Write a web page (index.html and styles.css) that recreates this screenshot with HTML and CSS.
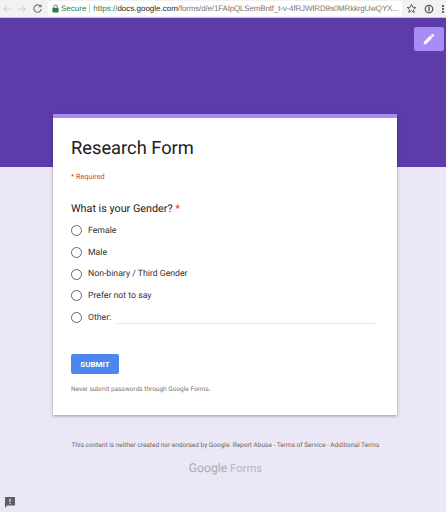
FILE: index.html
```html
<!DOCTYPE html>
<html lang="en">
<head>
  <meta charset="UTF-8">
  <meta name="viewport" content="width=device-width, initial-scale=1.0">
  <title>Research Form</title>
  <link rel="stylesheet" href="styles.css">
</head>
<body>
  <div class="toolbar">
    <svg class="nav-icon" width="10" height="10" viewBox="0 0 12 12"><path d="M11 6H2M6 2 2 6l4 4" fill="none" stroke="#d6d6d6" stroke-width="1.500"/></svg>
    <svg class="nav-icon" width="10" height="10" viewBox="0 0 12 12"><path d="M1 6h9M6 2l4 4-4 4" fill="none" stroke="#d6d6d6" stroke-width="1.500"/></svg>
    <svg class="nav-icon" width="11" height="11" viewBox="0 0 12 12"><path d="M10 6.500A4 4 0 1 1 8.800 3.200" fill="none" stroke="#777" stroke-width="1.300"/><path d="M10.500 1v3.600H6.900z" fill="#777"/></svg>
    <div class="omnibox">
      <svg class="lock" width="7" height="9" viewBox="0 0 8 10"><path d="M2 4V3a2 2 0 0 1 4 0v1" fill="none" stroke="#2a7d46" stroke-width="1"/><rect x="0.500" y="4" width="7" height="5.500" rx="0.500" fill="#2a7d46"/></svg>
      <span class="secure">Secure</span>
      <span class="url"><span class="url-scheme">https://</span><span class="url-host">docs.google.com</span><span class="url-path">/forms/d/e/1FAIpQLSemBntf_t-v-4fRJWIRD9s0MRkkrgUwQYX...</span></span>
    </div>
    <svg class="star" width="11" height="11" viewBox="0 0 24 24"><path d="M12 3l2.700 6.200 6.800.6-5.100 4.500 1.500 6.700L12 17l-5.900 3.500 1.500-6.700L2.500 9.800l6.800-.6z" fill="none" stroke="#555" stroke-width="2"/></svg>
    <svg class="ext" width="10" height="10" viewBox="0 0 12 12"><circle cx="6" cy="6" r="4.500" fill="none" stroke="#555" stroke-width="1.500"/><rect x="5.200" y="3" width="1.600" height="6" fill="#555"/></svg>
    <div class="dots"><i></i><i></i><i></i></div>
  </div>

  <div class="page">
    <div class="banner">
      <div class="edit-btn">
        <svg width="14" height="14" viewBox="0 0 24 24"><path d="M3 17.250V21h3.750L17.810 9.940l-3.750-3.750L3 17.250zM20.710 7.040a1 1 0 0 0 0-1.410l-2.340-2.340a1 1 0 0 0-1.410 0l-1.830 1.830 3.750 3.750 1.830-1.830z" fill="#fff"/></svg>
      </div>
    </div>

    <div class="card">
      <h1 class="form-title">Research Form</h1>
      <div class="required">* Required</div>
      <div class="question">What is your Gender? <span class="star-red">*</span></div>
      <div class="options">
        <div class="option"><span class="radio"></span>Female</div>
        <div class="option"><span class="radio"></span>Male</div>
        <div class="option"><span class="radio"></span>Non-binary / Third Gender</div>
        <div class="option"><span class="radio"></span>Prefer not to say</div>
        <div class="option"><span class="radio"></span>Other:<span class="other-line"></span></div>
      </div>
      <button class="submit">SUBMIT</button>
      <div class="never">Never submit passwords through Google Forms.</div>
    </div>

    <div class="footer">
      <div class="disclaimer">This content is neither created nor endorsed by Google. Report Abuse - Terms of Service - Additional Terms</div>
      <div class="brand"><span class="brand-google">Google</span> Forms</div>
    </div>

    <div class="report">
      <svg width="10" height="11" viewBox="0 0 12 13"><path d="M0 0h12v10H2.500L0 13z" fill="#5f5f66"/><rect x="5.200" y="2" width="1.600" height="4" fill="#ddd"/><rect x="5.200" y="7" width="1.600" height="1.500" fill="#ddd"/></svg>
    </div>
  </div>
</body>
</html>
```

FILE: styles.css
```css
* {
  box-sizing: border-box;
  margin: 0;
  padding: 0;
}

html, body {
  height: 512px;
  overflow: hidden;
}

body {
  font-family: Roboto, Arial, sans-serif;
  background-color: #ece7f6;
  color: #212121;
  text-rendering: geometricPrecision;
}

.toolbar {
  height: 18px;
  background-color: #f2f2f2;
  border-bottom: 1px solid #c9c6cf;
  display: flex;
  align-items: center;
  padding-left: 2px;
}

.nav-icon {
  margin-right: 5px;
  flex: none;
}

.omnibox {
  width: 354px;
  height: 15px;
  background: #fff;
  display: flex;
  align-items: center;
  padding-left: 4px;
  font-family: "Liberation Sans", Arial, sans-serif;
  font-size: 8px;
  white-space: nowrap;
  overflow: hidden;
  flex: none;
}

.lock {
  margin-right: 2px;
  flex: none;
}

.secure {
  color: #2a7d46;
  padding-right: 3px;
  border-right: 1px solid #ccc;
  margin-right: 3px;
}

.url {
  color: #777;
}

.url-scheme {
  color: #2a7d46;
}

.url-host {
  color: #222;
}

.url-path {
  letter-spacing: -0.160px;
}

.star {
  margin-left: 4px;
  flex: none;
}

.ext {
  margin-left: 7px;
  flex: none;
}

.dots {
  margin-left: 8px;
  display: flex;
  flex-direction: column;
  gap: 1px;
}

.dots i {
  display: block;
  width: 2px;
  height: 2px;
  background: #666;
}

.page {
  position: relative;
  height: 494px;
}

.banner {
  height: 149px;
  background-color: #5e3bab;
  display: flex;
  justify-content: flex-end;
  padding: 9px 2px 0 0;
}

.edit-btn {
  width: 30px;
  height: 24px;
  background-color: #a98bf5;
  border-radius: 2px;
  display: flex;
  align-items: center;
  justify-content: center;
}

.card {
  width: 344px;
  height: 301px;
  margin: -53px 0 0 53px;
  position: relative;
  background: #fff;
  border-top: 4px solid #a98bf5;
  box-shadow: 0 1px 3px rgba(0, 0, 0, 0.35);
  padding: 19px 18px 0;
}

.form-title {
  font-size: 18.300px;
  font-weight: 400;
  line-height: 24px;
  color: #202020;
}

.required {
  font-size: 7.300px;
  color: #d9402e;
  margin-top: 11px;
  line-height: 10px;
}

.question {
  font-size: 10.800px;
  line-height: 14px;
  margin-top: 20px;
}

.star-red {
  color: #d9402e;
}

.options {
  margin-top: 4px;
  display: flex;
  flex-direction: column;
}

.option {
  height: 21.700px;
  display: flex;
  align-items: center;
  font-size: 8.700px;
  color: #333;
}

.radio {
  width: 11px;
  height: 11px;
  border: 1px solid #666;
  border-radius: 50%;
  margin-right: 6px;
  flex: none;
}

.other-line {
  width: 258px;
  margin-left: 6px;
  margin-top: 11px;
  border-bottom: 1px solid #e3e3e3;
}

.submit {
  display: block;
  margin-top: 26px;
  width: 48px;
  height: 20px;
  background: #4d86ed;
  border: none;
  border-radius: 2px;
  color: #fff;
  font-family: Roboto, Arial, sans-serif;
  font-size: 8px;
  font-weight: 700;
}

.never {
  margin-top: 11px;
  font-size: 6.500px;
  line-height: 9px;
  color: #777;
}

.footer {
  text-align: center;
  margin-top: 26px;
  padding-left: 5px;
}

.disclaimer {
  font-size: 6.500px;
  line-height: 9px;
  color: #666;
}

.brand {
  margin-top: 10px;
  font-size: 11.300px;
  line-height: 16px;
  color: #b5b5bb;
}

.brand-google {
  font-size: 12.200px;
  color: #a9a9ae;
}

.report {
  position: absolute;
  left: 5px;
  bottom: 4px;
  line-height: 0;
}
```
